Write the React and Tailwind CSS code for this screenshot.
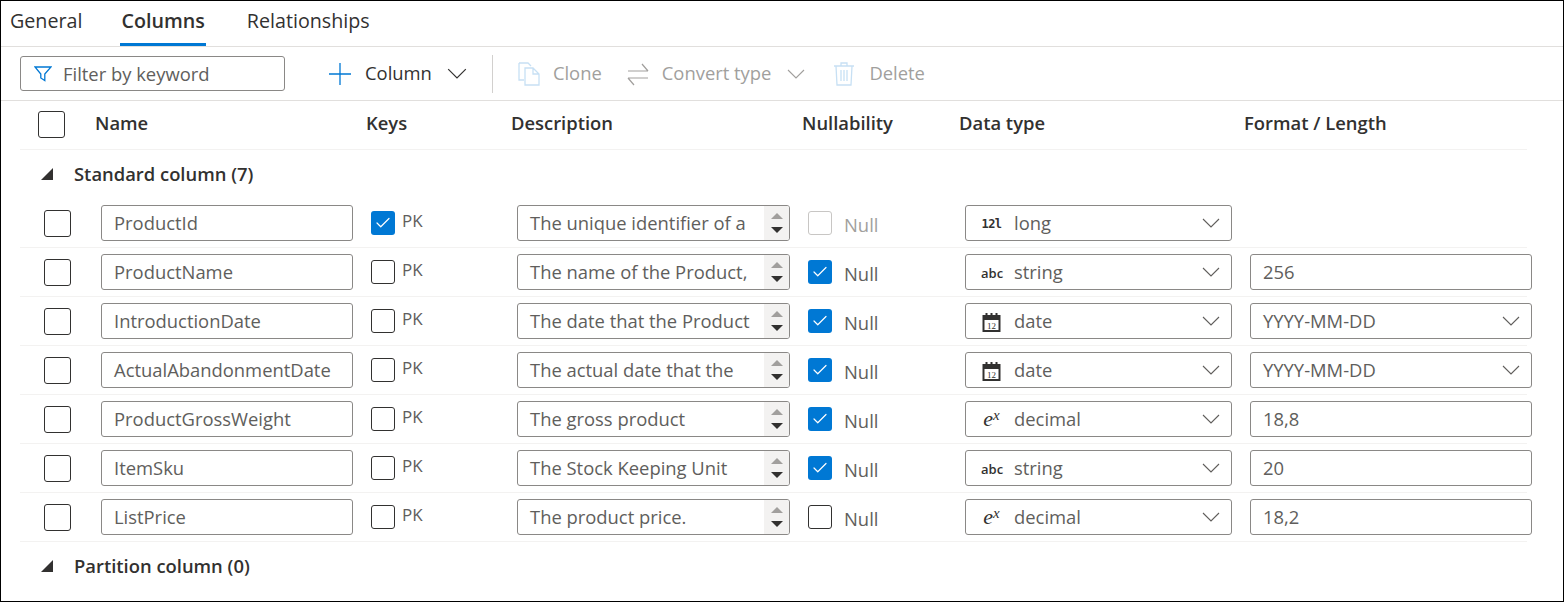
import { Check } from 'lucide-react'

const font = "[font-family:'Open_Sans',sans-serif]"

const rows = [
  { name: 'ProductId', pk: true, desc: 'The unique identifier of a', nullState: 'disabled', type: 'long', icon: 'long', format: null },
  { name: 'ProductName', pk: false, desc: 'The name of the Product,', nullState: 'on', type: 'string', icon: 'abc', format: '256' },
  { name: 'IntroductionDate', pk: false, desc: 'The date that the Product', nullState: 'on', type: 'date', icon: 'date', format: 'YYYY-MM-DD', select: true },
  { name: 'ActualAbandonmentDate', pk: false, desc: 'The actual date that the', nullState: 'on', type: 'date', icon: 'date', format: 'YYYY-MM-DD', select: true },
  { name: 'ProductGrossWeight', pk: false, desc: 'The gross product', nullState: 'on', type: 'decimal', icon: 'exp', format: '18,8' },
  { name: 'ItemSku', pk: false, desc: 'The Stock Keeping Unit', nullState: 'on', type: 'string', icon: 'abc', format: '20' },
  { name: 'ListPrice', pk: false, desc: 'The product price.', nullState: 'off', type: 'decimal', icon: 'exp', format: '18,2' },
]

function Chevron({ className = 'w-[18px] h-[10px] text-[#605e5c]' }) {
  return (
    <svg viewBox="0 0 18 10" className={`shrink-0 ${className}`} fill="none" stroke="currentColor" strokeWidth="1.1">
      <path d="M1 1l8 8 8-8" />
    </svg>
  )
}

function Box({ size = 'w-[24px] h-[24px]', state = 'off', className = '' }) {
  if (state === 'on') {
    return (
      <span className={`${size} ${className} shrink-0 rounded-[3px] bg-[#0078d4] flex items-center justify-center`}>
        <Check className="w-[18px] h-[18px] text-white" strokeWidth={1.6} />
      </span>
    )
  }
  const border = state === 'disabled' ? 'border-[#c8c6c4]' : 'border-[#323130]'
  return <span className={`${size} ${className} shrink-0 rounded-[3px] border ${border} bg-white`} />
}

function TypeIcon({ icon }) {
  if (icon === 'long') return <span className="w-[21px] shrink-0 text-[12px] font-bold text-[#323130] leading-none text-center mt-[2px] [font-family:'DejaVu_Sans_Mono',monospace] tracking-[-0.5px]">12l</span>
  if (icon === 'abc') return <span className="w-[21px] shrink-0 text-[13px] font-semibold text-[#323130] leading-none text-center mt-[2px]">abc</span>
  if (icon === 'exp') {
    return (
      <span className="w-[21px] shrink-0 text-center text-[#323130] leading-none [font-family:'Liberation_Serif',serif] italic text-[22px] whitespace-nowrap">
        e<span className="text-[15px] align-[6px] leading-none">x</span>
      </span>
    )
  }
  return (
    <svg viewBox="0 0 20 20" className="w-[21px] h-[20px] mt-[2px] shrink-0">
      <path d="M1 3h18v17H1z" fill="#323130" />
      <rect x="3" y="8" width="14" height="10" fill="#fff" />
      <rect x="4" y="1" width="2" height="3" fill="#323130" />
      <rect x="9" y="1" width="2" height="3" fill="#323130" />
      <rect x="14" y="1" width="2" height="3" fill="#323130" />
      <text x="10" y="16.5" textAnchor="middle" fontSize="9" fill="#323130" fontFamily="Liberation Serif, serif">12</text>
    </svg>
  )
}

function Field({ className = '', children }) {
  return (
    <div className={`h-[36px] shrink-0 rounded-[3px] border border-[#8a8886] bg-white flex items-center ${className}`}>
      {children}
    </div>
  )
}

function Row({ row }) {
  const nullDisabled = row.nullState === 'disabled'
  return (
    <div className="h-[49px] ml-[19px] w-[1507px] border-b border-[#f3f2f1] pl-[24px] flex items-center text-[18.4px] text-[#323130]">
      <Box size="w-[27px] h-[27px]" />
      <Field className="ml-[30px] w-[252px] pl-[12px] text-[#605e5c]">{row.name}</Field>
      <Box state={row.pk ? 'on' : 'off'} className="ml-[18px]" />
      <span className="ml-[7px] w-[115px] shrink-0 text-[17px] text-[#605e5c] mb-[4px]">PK</span>
      <Field className="w-[273px] pl-[12px] text-[#605e5c] relative overflow-hidden">
        <span className="whitespace-nowrap">{row.desc}</span>
        <span className="absolute right-0 top-0 bottom-0 w-[25px] bg-[#f3f2f1] flex flex-col items-center justify-center gap-[8px]">
          <span className="w-0 h-0 border-x-[6px] border-x-transparent border-b-[6px] border-b-[#a19f9d]" />
          <span className="w-0 h-0 border-x-[6px] border-x-transparent border-t-[6px] border-t-[#323130]" />
        </span>
      </Field>
      <Box state={row.nullState} className="ml-[18px]" />
      <span className={`ml-[12px] w-[121px] shrink-0 mt-[4px] ${nullDisabled ? 'text-[#a19f9d]' : 'text-[#605e5c]'}`}>Null</span>
      <Field className="w-[267px] pl-[15px] pr-[11px] text-[#605e5c]">
        <TypeIcon icon={row.icon} />
        <span className="ml-[12px] flex-1">{row.type}</span>
        <Chevron />
      </Field>
      {row.format && (
        <Field className="ml-[18px] w-[282px] pl-[12px] pr-[11px] text-[#605e5c] justify-between">
          <span>{row.format}</span>
          {row.select && <Chevron />}
        </Field>
      )}
    </div>
  )
}

function GroupHeader({ title, className = '' }) {
  return (
    <div className={`flex items-center pl-[40px] pb-[2px] font-semibold text-[18.4px] text-[#323130] ${className}`}>
      <svg viewBox="0 0 12 12" className="w-[12px] h-[12px]"><path d="M12 0v12H0z" fill="#323130" /></svg>
      <span className="ml-[21px]">{title}</span>
    </div>
  )
}

export default function App() {
  return (
    <div className={`w-[1564px] h-[602px] border border-black bg-white overflow-hidden ${font}`}>
      <div className="h-[46px] border-b border-[#e1dfdd] flex items-start text-[19.7px] text-[#323130]">
        <span className="ml-[9px] mt-[5px]">General</span>
        <div className="ml-[38px] h-[45px] border-b-[3px] border-[#0078d4] px-[1px] pt-[5px] font-semibold">Columns</div>
        <span className="ml-[41px] mt-[5px]">Relationships</span>
      </div>

      <div className="h-[54px] border-b border-[#e1dfdd] flex items-center pl-[19px] text-[18.4px]">
        <div className="w-[265px] h-[35px] shrink-0 rounded-[3px] border border-[#8a8886] flex items-center pl-[13px] text-[#605e5c]">
          <svg viewBox="0 0 18 18" className="w-[18px] h-[18px] text-[#0078d4]" fill="none" stroke="currentColor" strokeWidth="1.3">
            <path d="M1 2h16l-6.2 7v6.5l-4-2.5V9z" />
          </svg>
          <span className="ml-[11px]">Filter by keyword</span>
        </div>
        <svg viewBox="0 0 24 24" className="ml-[43px] w-[24px] h-[24px] shrink-0 text-[#0078d4]" fill="none" stroke="currentColor" strokeWidth="1.3">
          <path d="M12 1v22M1 12h22" />
        </svg>
        <span className="ml-[13px] mb-[2px] text-[#323130]">Column</span>
        <Chevron className="ml-[15px] w-[20px] h-[11px] text-[#323130]" />
        <span className="ml-[25px] w-px h-[38px] shrink-0 bg-[#d2d0ce]" />

        <svg viewBox="0 0 22 24" className="ml-[25px] w-[22px] h-[24px] shrink-0 text-[#c7e0f4]" fill="none" stroke="currentColor" strokeWidth="1.3">
          <path d="M1 1h9l3 3M1 1v17h5M7 6h8l6 6v11H7zM15 6v6h6" />
        </svg>
        <span className="ml-[13px] mb-[2px] text-[#a19f9d]">Clone</span>
        <svg viewBox="0 0 22 24" className="ml-[25px] w-[22px] h-[24px] shrink-0 text-[#a19f9d]" fill="none" stroke="currentColor" strokeWidth="1.2">
          <path d="M1 9h20M15 2l6 7M21 16H1M7 23l-6-7" />
        </svg>
        <span className="ml-[13px] mb-[2px] text-[#a19f9d]">Convert type</span>
        <Chevron className="ml-[16px] w-[18px] h-[10px] text-[#a19f9d]" />
        <svg viewBox="0 0 20 24" className="ml-[29px] w-[20px] h-[24px] shrink-0 text-[#c7e0f4]" fill="none" stroke="currentColor" strokeWidth="1.3">
          <path d="M0 4h20M7 4V1h6v3M2 4l1 19h14l1-19M7 8v11M10 8v11M13 8v11" />
        </svg>
        <span className="ml-[15px] mb-[2px] text-[#a19f9d]">Delete</span>
      </div>

      <div className="h-[49px] ml-[19px] w-[1507px] border-b border-[#f3f2f1] flex items-center pl-[18px] pb-[4px] text-[18.4px] font-semibold text-[#323130]">
        <Box size="w-[27px] h-[27px]" className="mt-[2px]" />
        <span className="ml-[30px] w-[271px] shrink-0">Name</span>
        <span className="w-[145px] shrink-0">Keys</span>
        <span className="w-[291px] shrink-0">Description</span>
        <span className="w-[157px] shrink-0">Nullability</span>
        <span className="w-[285px] shrink-0">Data type</span>
        <span>Format / Length</span>
      </div>

      <GroupHeader title="Standard column (7)" className="h-[49px]" />
      {rows.map((row) => <Row key={row.name} row={row} />)}
      <GroupHeader title="Partition column (0)" className="h-[49px]" />
    </div>
  )
}
